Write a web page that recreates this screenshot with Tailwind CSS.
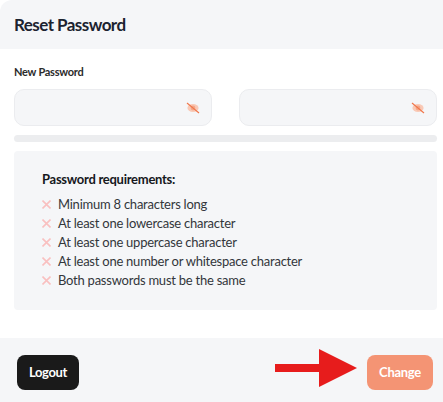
<!DOCTYPE html>
<html lang="en">
<head>
    <meta charset="UTF-8">
    <title>Reset Password</title>
    <script src="https://cdn.jsdelivr.net/npm/@tailwindcss/browser@4"></script>
</head>
<body class="bg-white font-['Lato',sans-serif] text-[#1f2124]">
    <div class="relative w-[443px] h-[402px] overflow-hidden flex flex-col">
        <!-- Header -->
        <div class="h-[49px] bg-[#f5f6f8] rounded-tl-[12px] pl-[14px] flex items-center shrink-0">
            <h2 class="text-[17px] tracking-[-0.55px] font-bold leading-none text-[#1c2330]">Reset Password</h2>
        </div>

        <div class="flex-1 px-[14px] pr-[6px]">
            <label class="block mt-[16px] text-[11px] tracking-[-0.25px] font-bold leading-[14px] text-[#2b2b2b]">New Password</label>

            <!-- Inputs -->
            <div class="flex gap-[27px] mt-[10px]">
                <div class="w-[198px] h-[37px] bg-[#f5f6f8] border border-[#ebecef] rounded-[10px] flex items-center justify-end pr-[11px]">
                    <svg class="w-[14px] h-[14px]" viewBox="0 0 14 14" fill="none">
                        <ellipse cx="7" cy="7" rx="5.6" ry="4" fill="#f9c9b6"/>
                        <circle cx="7" cy="7" r="2.4" fill="#f4a78a"/>
                        <path d="M1 2 13 12" stroke="#f0764a" stroke-width="1.1"/>
                    </svg>
                </div>
                <div class="w-[198px] h-[37px] bg-[#f5f6f8] border border-[#ebecef] rounded-[10px] flex items-center justify-end pr-[11px]">
                    <svg class="w-[14px] h-[14px]" viewBox="0 0 14 14" fill="none">
                        <ellipse cx="7" cy="7" rx="5.6" ry="4" fill="#f9c9b6"/>
                        <circle cx="7" cy="7" r="2.4" fill="#f4a78a"/>
                        <path d="M1 2 13 12" stroke="#f0764a" stroke-width="1.1"/>
                    </svg>
                </div>
            </div>

            <!-- Strength bar -->
            <div class="w-[423px] h-[7px] mt-[9px] bg-[#ecedef] rounded-full"></div>

            <!-- Requirements -->
            <div class="w-[423px] h-[159px] mt-[9px] bg-[#f5f6f8] rounded-[4px] pl-[28px] pt-[20px]">
                <h3 class="text-[13px] tracking-[-0.27px] font-bold leading-[16px] text-[#16181c]">Password requirements:</h3>
                <ul class="mt-[8px] text-[13px] tracking-[-0.24px] leading-[19px] text-[#33363b]">
                    <li class="flex items-center gap-[7px]">
                        <svg class="w-[9px] h-[9px]" viewBox="0 0 9 9"><path d="M.5.5l8 8M8.5.5l-8 8" stroke="#f9c0c0" stroke-width="1.6"/></svg>
                        Minimum 8 characters long
                    </li>
                    <li class="flex items-center gap-[7px]">
                        <svg class="w-[9px] h-[9px]" viewBox="0 0 9 9"><path d="M.5.5l8 8M8.5.5l-8 8" stroke="#f9c0c0" stroke-width="1.6"/></svg>
                        At least one lowercase character
                    </li>
                    <li class="flex items-center gap-[7px]">
                        <svg class="w-[9px] h-[9px]" viewBox="0 0 9 9"><path d="M.5.5l8 8M8.5.5l-8 8" stroke="#f9c0c0" stroke-width="1.6"/></svg>
                        At least one uppercase character
                    </li>
                    <li class="flex items-center gap-[7px]">
                        <svg class="w-[9px] h-[9px]" viewBox="0 0 9 9"><path d="M.5.5l8 8M8.5.5l-8 8" stroke="#f9c0c0" stroke-width="1.6"/></svg>
                        At least one number or whitespace character
                    </li>
                    <li class="flex items-center gap-[7px]">
                        <svg class="w-[9px] h-[9px]" viewBox="0 0 9 9"><path d="M.5.5l8 8M8.5.5l-8 8" stroke="#f9c0c0" stroke-width="1.6"/></svg>
                        Both passwords must be the same
                    </li>
                </ul>
            </div>
        </div>

        <!-- Footer -->
        <div class="h-[64px] bg-[#f5f6f8] pl-[17px] pr-[10px] pt-[17px] flex justify-between items-start shrink-0">
            <button class="w-[62px] h-[35px] bg-[#1a1a1a] text-white text-[13px] tracking-[-0.35px] font-bold rounded-[8px]">Logout</button>
            <button class="w-[66px] h-[35px] bg-[#f49474] text-white text-[13px] tracking-[-0.3px] font-bold rounded-[8px]">Change</button>
        </div>

        <!-- Annotation arrow -->
        <svg class="absolute left-[275px] top-[349px] w-[83px] h-[38px]" viewBox="0 0 83 38">
            <path d="M0 15H44V0L82 19 44 38V23H0Z" fill="#e71c1c"/>
        </svg>
    </div>
</body>
</html>
